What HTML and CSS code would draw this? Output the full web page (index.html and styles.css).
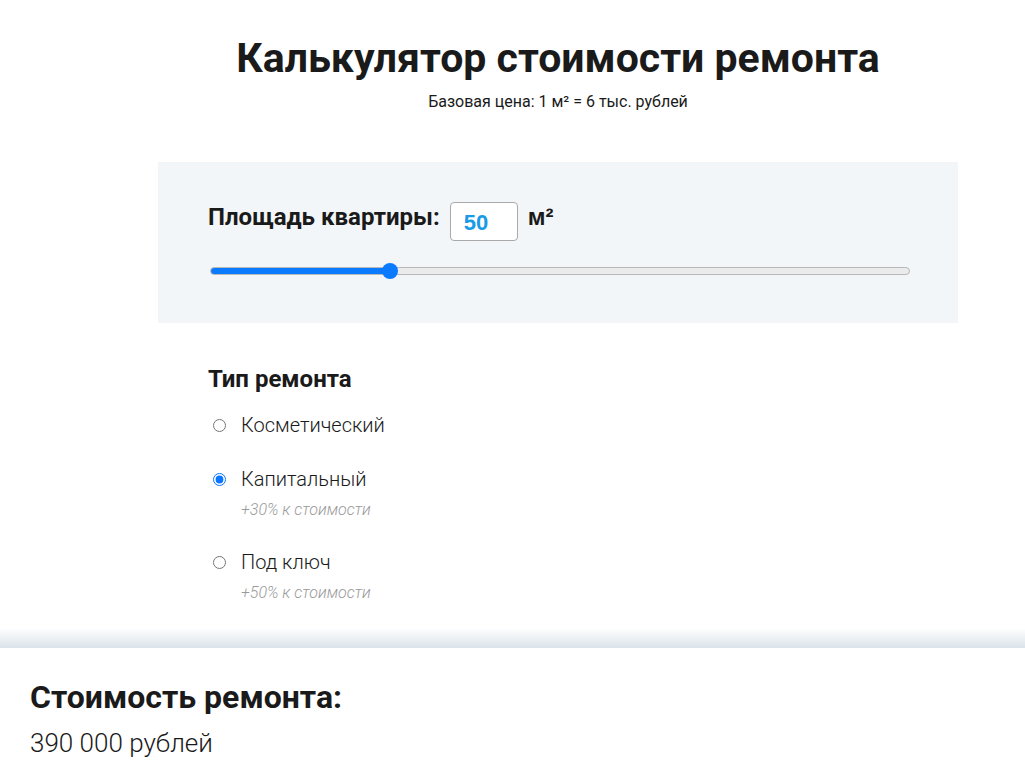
FILE: index.html
```html
<!DOCTYPE html>
<html lang="ru">
<head>
<meta charset="utf-8">
<link rel="stylesheet" href="styles.css">
</head>
<body>
<main class="calc">
  <header class="head">
    <h1 class="title">Калькулятор стоимости ремонта</h1>
    <p class="subtitle">Базовая цена: 1 м² = 6 тыс. рублей</p>
  </header>
  <section class="area">
    <div class="area-row">
      <label class="area-label" for="area">Площадь квартиры:</label>
      <input class="area-input" id="area" type="text" value="50">
      <span class="area-unit">м²</span>
    </div>
    <input class="slider" type="range" min="0" max="200" value="50">
  </section>
  <section class="types">
    <h2 class="types-title">Тип ремонта</h2>
    <div class="option">
      <label class="option-label"><input type="radio" name="t" class="radio"><span>Косметический</span></label>
    </div>
    <div class="option">
      <label class="option-label"><input type="radio" name="t" class="radio" checked><span>Капитальный</span></label>
      <p class="note">+30% к стоимости</p>
    </div>
    <div class="option">
      <label class="option-label"><input type="radio" name="t" class="radio"><span>Под ключ</span></label>
      <p class="note">+50% к стоимости</p>
    </div>
  </section>
</main>
<footer class="result">
  <h2 class="result-title">Стоимость ремонта:</h2>
  <p class="result-value">390 000 рублей</p>
</footer>
</body>
</html>
```
FILE: styles.css
```css
* { box-sizing: border-box; }
html, body { margin: 0; padding: 0; }
body {
  font-family: Roboto, "Liberation Sans", Arial, sans-serif;
  color: #1a1a1a;
  background: #fff;
}
.calc {
  width: 800px;
  margin-left: 158px;
  padding-top: 33px;
  padding-bottom: 160px;
}
.head { text-align: center; }
.title {
  margin: 0;
  font-size: 41px;
  font-weight: 700;
  line-height: 50px;
  color: #1a1a1a;
}
.subtitle {
  margin: 9px 0 0;
  font-size: 16px;
  line-height: 20px;
}
.area {
  margin-top: 50px;
  background: #f3f6f9;
  padding: 40px 48px 48px 50px;
}
.area-row {
  display: flex;
  align-items: flex-start;
}
.area-label {
  font-size: 24px;
  font-weight: 700;
  line-height: 30px;
  margin-right: 10px;
}
.area-input {
  width: 68px;
  height: 39px;
  border: 1px solid #a9a9a9;
  border-radius: 4px;
  background: #fff;
  font-family: "Liberation Sans", Arial, sans-serif;
  font-weight: 700;
  font-size: 22px;
  color: #1a9be6;
  padding: 3px 13px 0;
  margin: 0;
}
.area-unit {
  font-family: "Liberation Sans", Arial, sans-serif;
  font-weight: 700;
  font-size: 24px;
  line-height: 30px;
  margin-left: 10px;
}
.slider {
  -webkit-appearance: none;
  appearance: none;
  display: block;
  width: 700px;
  height: 8px;
  margin: 26px 0 0 2px;
  border-radius: 4px;
  border: 1px solid #b8b8b8;
  background: linear-gradient(to right, #0a7bff 0 25.5%, #ebebeb 25.5% 100%);
  outline: none;
}
.slider::-webkit-slider-thumb {
  -webkit-appearance: none;
  appearance: none;
  width: 16px;
  height: 16px;
  border-radius: 50%;
  background: #0a7bff;
  border: none;
}
.types {
  padding: 41px 50px 0;
}
.types-title {
  margin: 0 0 19px;
  font-size: 24px;
  font-weight: 700;
  line-height: 30px;
}
.option { margin-bottom: 30px; }
.option-label {
  display: flex;
  align-items: center;
  font-size: 20px;
  font-weight: 300;
  line-height: 24px;
  color: #1a1a1a;
}
.radio {
  margin: 0 15px 0 5px;
  width: 13px;
  height: 13px;
  accent-color: #0a75ff;
}
.note {
  margin: 9px 0 0 33px;
  font-size: 16px;
  font-style: italic;
  font-weight: 300;
  color: #9a9a9a;
  line-height: 20px;
}
.result {
  position: fixed;
  left: 0;
  right: 0;
  bottom: 0;
  height: 129px;
  background: #fff;
  padding: 30px 30px 0;
}
.result::before {
  content: "";
  position: absolute;
  left: 0;
  right: 0;
  top: -20px;
  height: 20px;
  background: linear-gradient(to bottom, rgba(220, 228, 234, 0), #dbe3e9);
}
.result-title {
  margin: 0;
  font-size: 32px;
  font-weight: 700;
  line-height: 38px;
}
.result-value {
  margin: 12px 0 0;
  font-size: 26px;
  font-weight: 300;
  line-height: 30px;
}
```
